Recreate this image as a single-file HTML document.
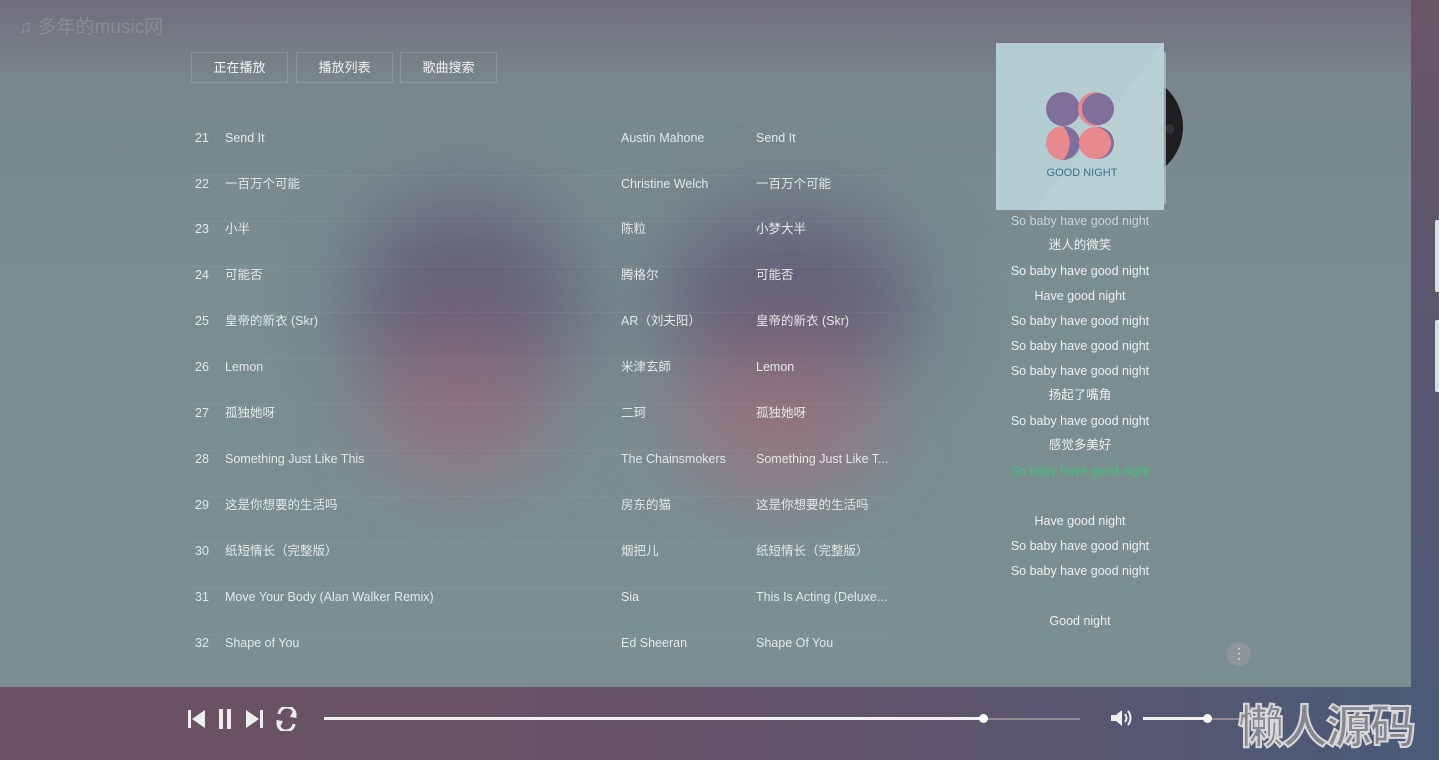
<!DOCTYPE html>
<html><head><meta charset="utf-8"><style>
*{margin:0;padding:0;box-sizing:border-box}
body{width:1439px;height:760px;overflow:hidden;position:relative;font-family:"Liberation Sans","Noto Sans CJK SC",sans-serif;background:#7a8c8f}
.bg{position:absolute;left:0;top:0;width:1411px;height:687px;background:linear-gradient(180deg,#716e7b 0%,#79868b 12%,#7a8d90 40%,#7b8e91 100%)}
.blob{position:absolute;border-radius:50%;filter:blur(45px)}
.rs{position:absolute;left:1411px;top:0;width:28px;height:687px;background:linear-gradient(180deg,#6a5566,#5a5670 50%,#4e5a75)}
.tab{position:absolute;right:0;width:4px;background:#d8e2e2;border-radius:2px 0 0 2px}
.logo{position:absolute;left:18px;top:12px;font-size:19px;color:#848e93}
.btn{position:absolute;top:52px;width:97px;height:31px;border:1px solid rgba(255,255,255,.15);color:#f2f2f2;font-size:13px;text-align:center;line-height:29px}
.row{position:absolute;left:190px;width:700px;height:46px;border-bottom:1px solid rgba(255,255,255,.05);font-size:12.5px;color:#e4e8e8}
.row span{position:absolute;top:0;line-height:16px;height:16px;white-space:nowrap}
.lyr{position:absolute;left:980px;width:200px;text-align:center;font-size:12.5px;color:#eef0f0;line-height:16px}
.bar{position:absolute;left:0;top:687px;width:1439px;height:73px;background:linear-gradient(90deg,#6c5162 0%,#675265 40%,#565670 80%,#495a78 100%)}
</style></head><body>
<div class="bg"></div>
<div class="blob" style="left:350px;top:200px;width:230px;height:200px;background:#5d5470;opacity:.8"></div>
<div class="blob" style="left:370px;top:330px;width:180px;height:150px;background:#9a6c78;opacity:.7"></div>
<div class="blob" style="left:660px;top:210px;width:260px;height:180px;background:#5d5470;opacity:.8"></div>
<div class="blob" style="left:680px;top:340px;width:200px;height:150px;background:#a06c78;opacity:.7"></div>
<div class="rs"><div class="tab" style="top:220px;height:72px"></div><div class="tab" style="top:320px;height:72px"></div></div>
<div class="logo">♫ 多年的music网</div>
<div class="btn" style="left:191px">正在播放</div>
<div class="btn" style="left:296px">播放列表</div>
<div class="btn" style="left:400px">歌曲搜索</div>

<div class="row" style="top:130px"><span style="left:5px">21</span><span style="left:35px">Send It</span><span style="left:431px">Austin Mahone</span><span style="left:566px">Send It</span></div>
<div class="row" style="top:176px"><span style="left:5px">22</span><span style="left:35px">一百万个可能</span><span style="left:431px">Christine Welch</span><span style="left:566px">一百万个可能</span></div>
<div class="row" style="top:221px"><span style="left:5px">23</span><span style="left:35px">小半</span><span style="left:431px">陈粒</span><span style="left:566px">小梦大半</span></div>
<div class="row" style="top:267px"><span style="left:5px">24</span><span style="left:35px">可能否</span><span style="left:431px">腾格尔</span><span style="left:566px">可能否</span></div>
<div class="row" style="top:313px"><span style="left:5px">25</span><span style="left:35px">皇帝的新衣 (Skr)</span><span style="left:431px">AR（刘夫阳）</span><span style="left:566px">皇帝的新衣 (Skr)</span></div>
<div class="row" style="top:359px"><span style="left:5px">26</span><span style="left:35px">Lemon</span><span style="left:431px">米津玄師</span><span style="left:566px">Lemon</span></div>
<div class="row" style="top:405px"><span style="left:5px">27</span><span style="left:35px">孤独她呀</span><span style="left:431px">二珂</span><span style="left:566px">孤独她呀</span></div>
<div class="row" style="top:451px"><span style="left:5px">28</span><span style="left:35px">Something Just Like This</span><span style="left:431px">The Chainsmokers</span><span style="left:566px">Something Just Like T...</span></div>
<div class="row" style="top:497px"><span style="left:5px">29</span><span style="left:35px">这是你想要的生活吗</span><span style="left:431px">房东的猫</span><span style="left:566px">这是你想要的生活吗</span></div>
<div class="row" style="top:543px"><span style="left:5px">30</span><span style="left:35px">纸短情长（完整版）</span><span style="left:431px">烟把儿</span><span style="left:566px">纸短情长（完整版）</span></div>
<div class="row" style="top:589px"><span style="left:5px">31</span><span style="left:35px">Move Your Body (Alan Walker Remix)</span><span style="left:431px">Sia</span><span style="left:566px">This Is Acting (Deluxe...</span></div>
<div class="row" style="top:635px;border:none"><span style="left:5px">32</span><span style="left:35px">Shape of You</span><span style="left:431px">Ed Sheeran</span><span style="left:566px">Shape Of You</span></div>

<svg style="position:absolute;left:996px;top:43px" width="200" height="170">
<circle cx="134" cy="84" r="53" fill="#1e1e20"/>
<path d="M166 40 A53 53 0 0 0 166 128 Z" fill="#7a7878"/>
<circle cx="174" cy="86" r="5" fill="#333"/>
<rect x="160" y="9" width="10" height="152" rx="2" fill="#b8c4c6" opacity=".75"/>
<rect x="0" y="0" width="168" height="167" fill="#b3cdd2"/>
<path d="M168 0 L168 167 L40 167 Z" fill="#bcd3d7" opacity=".6"/>
<circle cx="67" cy="66" r="17" fill="#7f6f9a"/>
<circle cx="99" cy="66" r="17" fill="#e8888f"/><circle cx="102" cy="66" r="16" fill="#7f6f9a"/>
<circle cx="67" cy="100" r="17" fill="#e8888f"/><path d="M67 83 A17 17 0 0 1 67 117 A25 25 0 0 0 67 83Z" fill="#7f6f9a"/>
<circle cx="102" cy="100" r="16" fill="#7f6f9a"/><circle cx="99" cy="100" r="16" fill="#e8888f"/>
<text x="86" y="133" text-anchor="middle" font-family="Liberation Sans" font-size="11" fill="#3b6f90">GOOD NIGHT</text>
</svg>
<div class="lyr" style="top:213px;opacity:.7">So baby have good night</div>
<div class="lyr" style="top:237px">迷人的微笑</div>
<div class="lyr" style="top:263px">So baby have good night</div>
<div class="lyr" style="top:288px">Have good night</div>
<div class="lyr" style="top:313px">So baby have good night</div>
<div class="lyr" style="top:338px">So baby have good night</div>
<div class="lyr" style="top:363px">So baby have good night</div>
<div class="lyr" style="top:387px">扬起了嘴角</div>
<div class="lyr" style="top:413px">So baby have good night</div>
<div class="lyr" style="top:437px">感觉多美好</div>
<div class="lyr" style="top:463px;color:#3ec27a">So baby have good night</div>
<div class="lyr" style="top:513px">Have good night</div>
<div class="lyr" style="top:538px">So baby have good night</div>
<div class="lyr" style="top:563px">So baby have good night</div>
<div class="lyr" style="top:613px">Good night</div>
<div style="position:absolute;left:1227px;top:642px;width:24px;height:24px;border-radius:50%;background:#8d9799;color:#e8e8e8;font-size:14px;text-align:center;line-height:22px">⋮</div>

<div class="bar">
<svg style="position:absolute;left:186px;top:20px" width="120" height="24" fill="#eee">
<rect x="2" y="3" width="3" height="18"/><path d="M19 3 L6 12 L19 21Z"/>
<rect x="33" y="2" width="4" height="20"/><rect x="41" y="2" width="4" height="20"/>
<path d="M60 3 L73 12 L60 21Z"/><rect x="74" y="3" width="3" height="18"/>
<path d="M93 7 A7 7 0 0 1 109 9" stroke="#eee" stroke-width="3" fill="none"/><path d="M107 4 L111 11 L104 10Z"/>
<path d="M108 17 A7 7 0 0 1 92 15" stroke="#eee" stroke-width="3" fill="none"/><path d="M94 20 L90 13 L97 14Z"/>
</svg>
<div style="position:absolute;left:324px;top:31px;width:756px;height:2px;background:#8f8a96"></div>
<div style="position:absolute;left:324px;top:30px;width:660px;height:3px;background:#f0f0f0"></div>
<div style="position:absolute;left:979px;top:27px;width:9px;height:9px;border-radius:50%;background:#fff"></div>
<svg style="position:absolute;left:1110px;top:21px" width="24" height="20" fill="#eee"><path d="M1 7 H6 L12 2 V18 L6 13 H1Z"/><path d="M15 6 Q18 10 15 14 M18 3 Q23 10 18 17" stroke="#eee" stroke-width="2" fill="none"/></svg>
<div style="position:absolute;left:1143px;top:31px;width:100px;height:2px;background:#8f8a96"></div>
<div style="position:absolute;left:1143px;top:30px;width:64px;height:3px;background:#f0f0f0"></div>
<div style="position:absolute;left:1203px;top:27px;width:9px;height:9px;border-radius:50%;background:#fff"></div>
<div style="position:absolute;left:1238px;top:10px;font-size:46px;font-weight:bold;color:#86868e;-webkit-text-stroke:2px #d8d8d8;font-family:'Noto Sans CJK SC',sans-serif;letter-spacing:-2px;line-height:54px">懒人源码</div>
</div>
</body></html>
